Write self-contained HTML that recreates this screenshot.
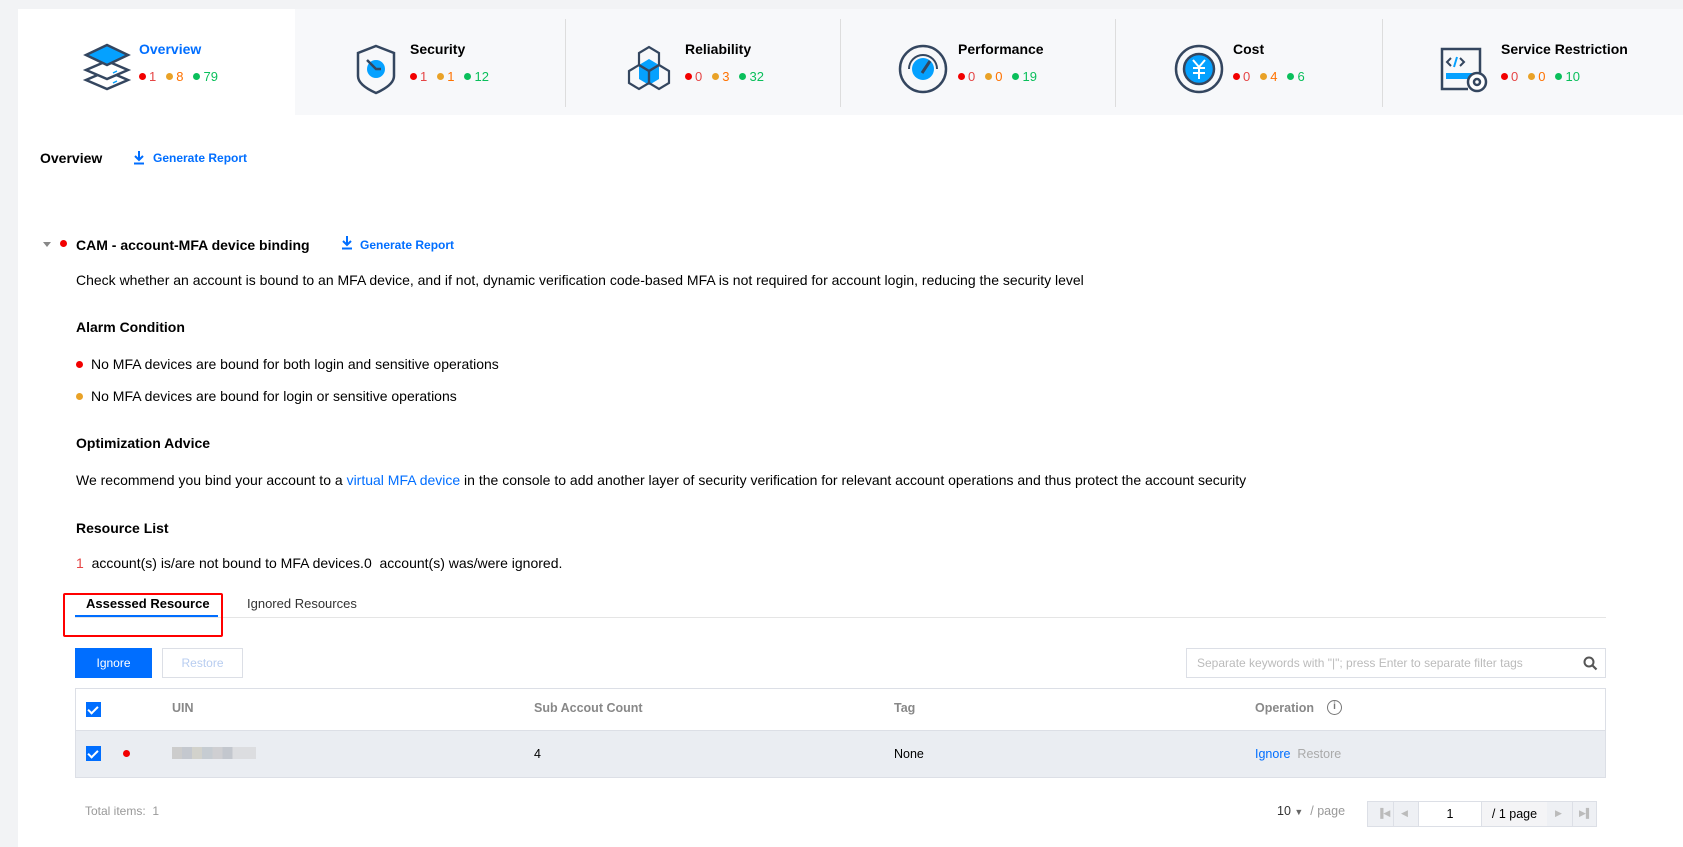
<!DOCTYPE html>
<html><head><meta charset="utf-8"><style>
*{box-sizing:border-box;margin:0;padding:0}
body{width:1683px;height:847px;background:#f2f3f5;font-family:"Liberation Sans",sans-serif;color:#000;position:relative;overflow:hidden;font-size:14px}
.card{position:absolute;left:18px;top:9px;right:0;bottom:0;background:#fff}
.tabs{position:absolute;left:0;top:0;right:0;height:106px;background:#f7f8fa}
.tab{position:absolute;top:0;height:106px}
.sep{position:absolute;top:10px;width:1px;height:88px;background:#ddd}
.tt{position:absolute;font-weight:bold;font-size:14px;top:32px}
.st{position:absolute;top:60px;font-size:13px;white-space:nowrap}
.d{display:inline-block;width:7px;height:7px;border-radius:50%;margin-right:3px;vertical-align:1px}
.r{background:#f20000}.o{background:#e9a227}.g{background:#0abf5b}
.cr{color:#e54545;margin-right:10px}.co{color:#ff7200;margin-right:10px}.cg{color:#0abf5b}
.abs{position:absolute;white-space:nowrap}
.b{font-weight:bold}
.blue{color:#006eff}
.ico{position:absolute}
.tbl{position:absolute;left:57px;top:679px;width:1531px;height:90px;border:1px solid #dcdfe6}
.cb{position:absolute;width:15px;height:15px;background:#006eff}
.cb:after{content:"";position:absolute;left:4px;top:2px;width:4px;height:8px;border:solid #fff;border-width:0 2px 2px 0;transform:rotate(45deg)}
</style></head><body>
<div class="card">
 <div class="tabs">
  <div class="tab" style="left:0;width:277px;background:#fff"></div>
  <div class="sep" style="left:547px"></div><div class="sep" style="left:822px"></div><div class="sep" style="left:1097px"></div><div class="sep" style="left:1364px"></div>
  <svg class="ico" style="left:62px;top:30px" width="54" height="58" viewBox="0 0 54 58" fill="none" stroke="#34465f" stroke-width="2.5">
   <path d="M27 32 L48 41 L27 50 L6 41 Z"/><path d="M27 22 L48 31 L27 40 L6 31 Z" fill="#fff"/><path d="M27 6 L48 16 L27 26 L6 16 Z" fill="#05a1ff" stroke="#34465f"/><path d="M33 34 L37 32 M33 44 L37 42" stroke="#05a1ff" stroke-width="1.5"/></svg>
  <div class="tt blue" style="left:121px">Overview</div>
  <div class="st" style="left:121px"><span class="d r"></span><span class="cr">1</span><span class="d o"></span><span class="co">8</span><span class="d g"></span><span class="cg">79</span></div>
  <svg class="ico" style="left:336px;top:34px" width="44" height="52" viewBox="0 0 44 52" fill="none" stroke="#34465f" stroke-width="2.5"><path d="M22 3 L40 10 V33 Q40 42 22 50 Q4 42 4 33 V10 Z"/><circle cx="22" cy="26" r="9" fill="#05a1ff" stroke="none"/><path d="M13 17 L22 26 L27 26" stroke-width="2.5"/></svg>
  <div class="tt" style="left:392px">Security</div>
  <div class="st" style="left:392px"><span class="d r"></span><span class="cr">1</span><span class="d o"></span><span class="co">1</span><span class="d g"></span><span class="cg">12</span></div>
  <svg class="ico" style="left:606px;top:32px" width="50" height="56" viewBox="0 0 50 56" fill="none" stroke="#34465f" stroke-width="2.2"><path d="M15 24 L25 18 L35 24 L35 38 L25 44 L15 38 Z" fill="#05a1ff" stroke="none"/><path d="M25 30 L35 24 L35 12 L25 6 L15 12 L15 24 Z"/><path d="M15 24 L25 30 L25 42 L15 48 L5 42 L5 30 Z"/><path d="M35 24 L45 30 L45 42 L35 48 L25 42 L25 30 Z"/></svg>
  <div class="tt" style="left:667px">Reliability</div>
  <div class="st" style="left:667px"><span class="d r"></span><span class="cr">0</span><span class="d o"></span><span class="co">3</span><span class="d g"></span><span class="cg">32</span></div>
  <svg class="ico" style="left:880px;top:34px" width="50" height="52" viewBox="0 0 50 52" fill="none" stroke="#34465f" stroke-width="2.5"><circle cx="25" cy="26" r="23"/><path d="M11 26 A14 14 0 0 1 39 26" stroke-width="2"/><circle cx="25" cy="26" r="11" fill="#05a1ff" stroke="none"/><path d="M24 30 L32 18" stroke-width="3"/></svg>
  <div class="tt" style="left:940px">Performance</div>
  <div class="st" style="left:940px"><span class="d r"></span><span class="cr">0</span><span class="d o"></span><span class="co">0</span><span class="d g"></span><span class="cg">19</span></div>
  <svg class="ico" style="left:1156px;top:34px" width="50" height="52" viewBox="0 0 50 52" fill="none" stroke="#34465f" stroke-width="2.5"><circle cx="25" cy="26" r="23"/><circle cx="25" cy="26" r="15" fill="#05a1ff"/><path d="M19 17 L25 24 L31 17 M25 24 V36 M19 25 H31 M19 30 H31" stroke="#fff" stroke-width="2"/></svg>
  <div class="tt" style="left:1215px">Cost</div>
  <div class="st" style="left:1215px"><span class="d r"></span><span class="cr">0</span><span class="d o"></span><span class="co">4</span><span class="d g"></span><span class="cg">6</span></div>
  <svg class="ico" style="left:1422px;top:36px" width="50" height="50" viewBox="0 0 50 50" fill="none" stroke="#34465f" stroke-width="2.5"><path d="M40 28 V4 H2 V44 H28"/><path d="M11 13 L7 17 L11 21 M20 13 L24 17 L20 21" stroke-width="2"/><path d="M17 12 L14 22" stroke="#05a1ff" stroke-width="2"/><rect x="6" y="28" width="26" height="6" fill="#05a1ff" stroke="none"/><circle cx="37" cy="37" r="9" fill="#fff"/><circle cx="37" cy="37" r="3"/></svg>
  <div class="tt" style="left:1483px">Service Restriction</div>
  <div class="st" style="left:1483px"><span class="d r"></span><span class="cr">0</span><span class="d o"></span><span class="co">0</span><span class="d g"></span><span class="cg">10</span></div>
 </div>

 <div class="abs b" style="left:22px;top:141px;font-size:14px">Overview</div>
 <svg class="ico" style="left:115px;top:141px" width="12" height="15"><path d="M6 1 V10 M2 6 L6 10 L10 6 M1 13.5 H11" stroke="#006eff" stroke-width="2" fill="none"/></svg>
 <div class="abs blue b" style="left:135px;top:142px;font-size:12px">Generate Report</div>

 <div class="abs" style="left:25px;top:233px;width:0;height:0;border-left:4px solid transparent;border-right:4px solid transparent;border-top:5px solid #888"></div>
 <div class="abs d r" style="left:42px;top:231px"></div>
 <div class="abs b" style="left:58px;top:228px">CAM - account-MFA device binding</div>
 <svg class="ico" style="left:323px;top:226px" width="12" height="15"><path d="M6 1 V10 M2 6 L6 10 L10 6 M1 13.5 H11" stroke="#006eff" stroke-width="2" fill="none"/></svg>
 <div class="abs blue b" style="left:342px;top:229px;font-size:12px">Generate Report</div>

 <div class="abs" style="left:58px;top:263px">Check whether an account is bound to an MFA device, and if not, dynamic verification code-based MFA is not required for account login, reducing the security level</div>
 <div class="abs b" style="left:58px;top:310px">Alarm Condition</div>
 <div class="abs d r" style="left:58px;top:352px"></div>
 <div class="abs" style="left:73px;top:347px">No MFA devices are bound for both login and sensitive operations</div>
 <div class="abs d o" style="left:58px;top:384px"></div>
 <div class="abs" style="left:73px;top:379px">No MFA devices are bound for login or sensitive operations</div>
 <div class="abs b" style="left:58px;top:426px">Optimization Advice</div>
 <div class="abs" style="left:58px;top:463px">We recommend you bind your account to a <span class="blue">virtual MFA device</span> in the console to add another layer of security verification for relevant account operations and thus protect the account security</div>
 <div class="abs b" style="left:58px;top:511px">Resource List</div>
 <div class="abs" style="left:58px;top:546px"><span style="color:#e54545">1</span>&nbsp; account(s) is/are not bound to MFA devices.0&nbsp; account(s) was/were ignored.</div>

 <div class="abs" style="left:57px;top:608px;width:1531px;height:1px;background:#e5e5e5"></div>
 <div class="abs" style="left:57px;top:606px;width:143px;height:2px;background:#006eff"></div>
 <div class="abs b" style="left:68px;top:587px;font-size:13px">Assessed Resource</div>
 <div class="abs" style="left:229px;top:587px;font-size:13px;color:#333">Ignored Resources</div>
 <div class="abs" style="left:45px;top:584px;width:160px;height:44px;border:2px solid #f00;border-radius:2px"></div>

 <div class="abs" style="left:57px;top:639px;width:77px;height:30px;background:#006eff;color:#fff;font-size:12px;text-align:center;line-height:30px">Ignore</div>
 <div class="abs" style="left:144px;top:639px;width:81px;height:30px;border:1px solid #dcdfe6;color:#b8cdf0;font-size:12px;text-align:center;line-height:28px">Restore</div>
 <div class="abs" style="left:1168px;top:639px;width:420px;height:30px;border:1px solid #dcdfe6;color:#bbb;font-size:12px;line-height:28px;padding-left:10px">Separate keywords with "|"; press Enter to separate filter tags</div>
 <svg class="ico" style="left:1565px;top:647px" width="15" height="15"><circle cx="6" cy="6" r="4.5" stroke="#555" stroke-width="2" fill="none"/><path d="M9.5 9.5 L13.5 13.5" stroke="#555" stroke-width="2.2"/></svg>

 <div class="tbl">
  <div class="abs" style="left:0;top:41px;width:1529px;height:47px;background:#eaedf2;border-top:1px solid #dcdfe6"></div>
  <div class="cb" style="left:10px;top:13px"></div>
  <div class="abs b" style="left:96px;top:12px;font-size:12.5px;color:#888">UIN</div>
  <div class="abs b" style="left:458px;top:12px;font-size:12.5px;color:#888">Sub Accout Count</div>
  <div class="abs b" style="left:818px;top:12px;font-size:12.5px;color:#888">Tag</div>
  <div class="abs b" style="left:1179px;top:12px;font-size:12.5px;color:#888">Operation</div>
  <div class="abs" style="left:1251px;top:11px;width:15px;height:15px;border:1.5px solid #777;border-radius:50%;font-size:10px;text-align:center;line-height:12px;color:#777;font-weight:bold">i</div>
  <div class="cb" style="left:10px;top:57px"></div>
  <div class="abs d r" style="left:47px;top:61px"></div>
  <div class="abs" style="left:96px;top:58px;width:84px;height:12px;background:linear-gradient(90deg,#ccc 0 12%,#c4c8cf 12% 24%,#d2d2cc 24% 36%,#c6ccd2 36% 48%,#cfcfd2 48% 60%,#c3c7ce 60% 72%,#dcdde0 72%)"></div>
  <div class="abs" style="left:458px;top:58px;font-size:12.5px">4</div>
  <div class="abs" style="left:818px;top:58px;font-size:12.5px">None</div>
  <div class="abs" style="left:1179px;top:58px;font-size:12.5px"><span class="blue">Ignore</span> <span style="color:#aaa">&nbsp;Restore</span></div>
 </div>

 <div class="abs" style="left:67px;top:795px;font-size:12px;color:#999">Total items:&nbsp; 1</div>
 <div class="abs" style="left:1259px;top:795px;font-size:12.5px;color:#333">10 <span style="font-size:9px;color:#666">▼</span> <span style="color:#999">&nbsp;/ page</span></div>
 <div class="abs" style="left:1349px;top:792px;width:230px;height:26px;border:1px solid #dcdfe6;background:#eef0f4;font-size:12.5px">
  <div class="abs" style="left:25px;top:0;width:1px;height:24px;background:#dcdfe6"></div>
  <div class="abs" style="left:9px;top:6px;color:#bbb;font-size:9px">▐◀</div>
  <div class="abs" style="left:33px;top:6px;color:#bbb;font-size:9px">◀</div>
  <div class="abs" style="left:50px;top:0;width:64px;height:24px;background:#fff;border-left:1px solid #dcdfe6;border-right:1px solid #dcdfe6;text-align:center;line-height:24px">1</div>
  <div class="abs" style="left:114px;top:0;width:65px;height:24px;background:#f4f4f6;text-align:center;line-height:24px">/ 1 page</div>
  <div class="abs" style="left:187px;top:6px;color:#bbb;font-size:9px">▶</div>
  <div class="abs" style="left:204px;top:0;width:1px;height:24px;background:#dcdfe6"></div>
  <div class="abs" style="left:211px;top:6px;color:#bbb;font-size:9px">▶▌</div>
 </div>
</div>
</body></html>
